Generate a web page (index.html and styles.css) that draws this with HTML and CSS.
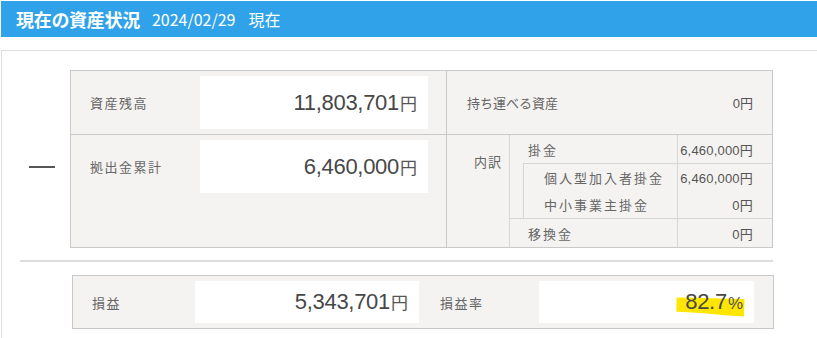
FILE: index.html
```html
<!DOCTYPE html>
<html lang="ja">
<head>
<meta charset="utf-8">
<title>現在の資産状況</title>
<link rel="stylesheet" href="styles.css">
</head>
<body>
<div class="page">
  <header class="title-bar">
    <h1 class="title">現在の資産状況</h1>
    <span class="as-of">2024/02/29<span class="as-of-suffix">現在</span></span>
  </header>

  <section class="panel">
    <div class="calc-row">
      <div class="operator"><span class="minus"></span></div>

      <div class="summary">
        <div class="cell cell-main cell-top">
          <div class="field">
            <span class="label">資産残高</span>
            <div class="amount-box"><span class="amount"><span class="num">11,803,701</span><span class="unit">円</span></span></div>
          </div>
        </div>
        <div class="cell cell-side cell-top">
          <span class="side-label">持ち運べる資産</span>
          <span class="small-amount">0円</span>
        </div>
        <div class="cell cell-main">
          <div class="field">
            <span class="label">拠出金累計</span>
            <div class="amount-box"><span class="amount"><span class="num">6,460,000</span><span class="unit">円</span></span></div>
          </div>
        </div>
        <div class="cell cell-breakdown">
          <div class="breakdown-head">内訳</div>
          <div class="breakdown">
            <div class="b-row">
              <span class="b-label">掛金</span>
              <span class="b-value">6,460,000円</span>
            </div>
            <div class="b-group">
              <div class="b-row">
                <span class="b-label">個人型加入者掛金</span>
                <span class="b-value">6,460,000円</span>
              </div>
              <div class="b-row">
                <span class="b-label">中小事業主掛金</span>
                <span class="b-value">0円</span>
              </div>
            </div>
            <div class="b-row b-row-last">
              <span class="b-label">移換金</span>
              <span class="b-value">0円</span>
            </div>
          </div>
        </div>
      </div>
    </div>

    <hr class="divider">

    <div class="result">
      <span class="result-label">損益</span>
      <div class="result-box profit"><span class="amount"><span class="num">5,343,701</span><span class="unit">円</span></span></div>
      <span class="result-label rate-label">損益率</span>
      <div class="result-box rate">
        <span class="amount marked">
          <svg class="marker" viewBox="0 0 69 20" aria-hidden="true"><path d="M0.5,0.5 L20,0.8 L45,1.5 L68.5,2 L68,19.5 L52,18.6 L30,16.5 L12,15.2 L0.5,14.8 Z" fill="#ffe600"/></svg>
          <span class="num">82.7</span><span class="unit pct">%</span>
        </span>
      </div>
    </div>
  </section>
</div>
</body>
</html>
```

FILE: styles.css
```css
html, body {
  margin: 0;
  background: #ffffff;
  overflow: hidden;
}

.page {
  padding: 1px 0 0 1px;
  font-family: "Noto Sans CJK JP", sans-serif;
  color: #666666;
}

/* Title bar */
.title-bar {
  height: 36px;
  background: #2fa2ea;
  color: #ffffff;
  display: flex;
  align-items: center;
  padding-left: 15px;
}

.title {
  margin: 0;
  font-size: 18px;
  font-weight: bold;
  letter-spacing: -0.3px;
}

.as-of {
  margin-left: 12px;
  font-size: 16px;
}

.as-of-suffix {
  margin-left: 13px;
}

/* White panel holding the calculation; it continues past the window's right and bottom edges */
.panel {
  margin-top: 13px;
  border-top: 1px solid #dddddd;
  border-left: 1px solid #dddddd;
  padding: 19px 0 9px 18px;
}

.calc-row {
  display: flex;
}

.operator {
  width: 50px;
  padding-top: 96px;
  box-sizing: border-box;
}

.minus {
  display: block;
  width: 26px;
  height: 2px;
  margin-left: 9px;
  background: #555555;
}

/* Summary table */
.summary {
  width: 703px;
  box-sizing: border-box;
  display: grid;
  grid-template-columns: 376px 1fr;
  border: 1px solid #c9c9c9;
  background: #f4f3f1;
}

.cell-top {
  border-bottom: 1px solid #c9c9c9;
}

.cell-main {
  display: flex;
  align-items: flex-start;
  padding: 5px 18px 5px 19px;
  border-right: 1px solid #c9c9c9;
}

.field {
  display: flex;
  align-items: center;
  height: 53px;
}

.label {
  width: 110px;
  font-size: 13px;
  letter-spacing: 1.5px;
  color: #666666;
}

.amount-box {
  width: 228px;
  height: 53px;
  box-sizing: border-box;
  background: #ffffff;
  display: flex;
  align-items: center;
  justify-content: flex-end;
  padding-right: 11px;
}

.amount {
  white-space: nowrap;
}

.num {
  font-family: "Liberation Sans", sans-serif;
  font-size: 22px;
  letter-spacing: -0.3px;
  color: #474747;
}

.unit {
  font-size: 17px;
  color: #555555;
  margin-left: 1px;
}

.cell-side {
  display: flex;
  align-items: center;
  justify-content: space-between;
  padding: 0 19px 0 20px;
}

.side-label {
  font-size: 13px;
  color: #666666;
}

.small-amount {
  font-family: "Liberation Sans", "Noto Sans CJK JP", sans-serif;
  font-size: 13px;
  color: #555555;
}

/* Breakdown of contributions */
.cell-breakdown {
  display: flex;
}

.breakdown-head {
  width: 63px;
  box-sizing: border-box;
  border-right: 1px solid #d6d6d6;
  padding: 17px 0 0 27px;
  font-size: 13px;
  letter-spacing: 1px;
  color: #666666;
}

.breakdown {
  flex: 1;
}

.b-row {
  display: flex;
  height: 28px;
}

.b-label {
  flex: 1;
  display: flex;
  align-items: center;
  padding-left: 18px;
  font-size: 13px;
  letter-spacing: 2px;
  color: #666666;
}

.b-value {
  width: 95px;
  box-sizing: border-box;
  border-left: 1px solid #d6d6d6;
  display: flex;
  align-items: center;
  justify-content: flex-end;
  padding-right: 19px;
  white-space: nowrap;
  font-family: "Liberation Sans", "Noto Sans CJK JP", sans-serif;
  font-size: 13px;
  letter-spacing: 0.2px;
  color: #555555;
}

.b-group {
  margin-left: 13px;
  border-left: 1px solid #d6d6d6;
  border-top: 1px solid #d6d6d6;
}

.b-group .b-row {
  height: 27px;
}

.b-group .b-label {
  padding-left: 20px;
}

.b-row-last {
  border-top: 1px solid #d6d6d6;
}

/* Divider and result row */
.divider {
  width: 753px;
  height: 2px;
  margin: 12px 0 13px;
  border: 0;
  background: #dddddd;
}

.result {
  margin-left: 52px;
  width: 702px;
  box-sizing: border-box;
  display: flex;
  align-items: center;
  padding: 5px 19px;
  border: 1px solid #c9c9c9;
  background: #f4f3f1;
}

.result-label {
  width: 103px;
  font-size: 13px;
  letter-spacing: 1.5px;
  color: #666666;
}

.rate-label {
  width: 99px;
  margin-left: 21px;
}

.result-box {
  height: 42px;
  box-sizing: border-box;
  background: #ffffff;
  display: flex;
  align-items: center;
  justify-content: flex-end;
  padding-right: 11px;
}

.result-box.profit {
  width: 224px;
}

.result-box.rate {
  flex: 1;
}

.marked {
  position: relative;
  z-index: 0;
}

.marker {
  position: absolute;
  left: -9px;
  top: 8px;
  width: 69px;
  height: 20px;
  z-index: -1;
}

.pct {
  font-family: "Liberation Sans", sans-serif;
  font-weight: 300;
}
```
